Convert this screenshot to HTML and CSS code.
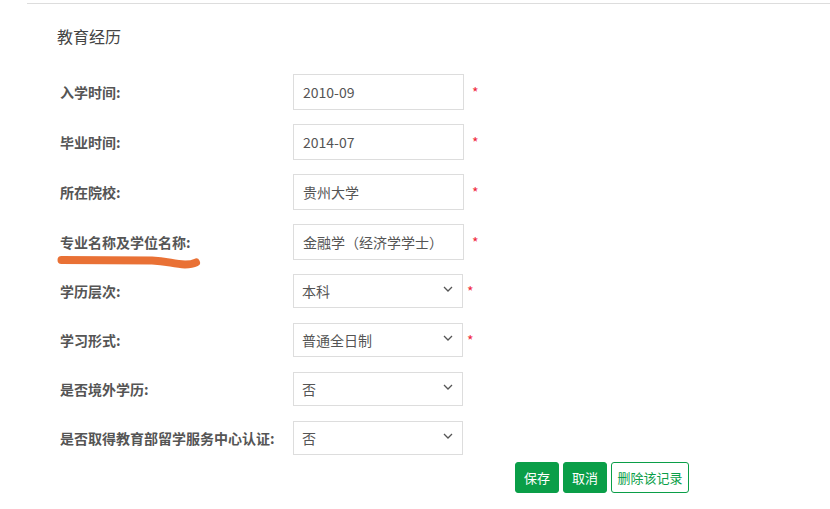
FILE: index.html
```html
<html>
  <head>
    <meta charset="utf-8">
    <link rel="stylesheet" href="styles.css">
  </head>
  <body>
    <div class="panel">
      <h3 class="title">教育经历</h3>
      <form class="edu_form">
        <div class="row">
          <label class="lbl">入学时间:</label>
          <input class="txt" type="text" value="2010-09">
          <span class="req">*</span>
        </div>
        <div class="row">
          <label class="lbl">毕业时间:</label>
          <input class="txt" type="text" value="2014-07">
          <span class="req">*</span>
        </div>
        <div class="row">
          <label class="lbl">所在院校:</label>
          <input class="txt" type="text" value="贵州大学">
          <span class="req">*</span>
        </div>
        <div class="row">
          <label class="lbl marked">专业名称及学位名称:
            <svg class="scribble" width="150" height="20" viewBox="0 0 150 20">
              <path d="M4.5 8 L95 8.5 C110 9 116 12 128 12.5 C134 12.5 137 11.5 139 10.5" fill="none" stroke="#e8692a" stroke-width="8" stroke-linecap="round" opacity="0.95"/>
            </svg>
          </label>
          <input class="txt" type="text" value="金融学（经济学学士）">
          <span class="req">*</span>
        </div>
        <div class="row sel_row">
          <label class="lbl">学历层次:</label>
          <div class="sel_wrap">
            <select class="sel"><option>本科</option></select>
            <svg class="arrow" width="10" height="6" viewBox="0 0 10 6"><path d="M1 1 L5 5 L9 1" fill="none" stroke="#555" stroke-width="1.3"/></svg>
          </div>
          <span class="req small">*</span>
        </div>
        <div class="row sel_row">
          <label class="lbl">学习形式:</label>
          <div class="sel_wrap">
            <select class="sel"><option>普通全日制</option></select>
            <svg class="arrow" width="10" height="6" viewBox="0 0 10 6"><path d="M1 1 L5 5 L9 1" fill="none" stroke="#555" stroke-width="1.3"/></svg>
          </div>
          <span class="req small">*</span>
        </div>
        <div class="row sel_row">
          <label class="lbl">是否境外学历:</label>
          <div class="sel_wrap">
            <select class="sel"><option>否</option></select>
            <svg class="arrow" width="10" height="6" viewBox="0 0 10 6"><path d="M1 1 L5 5 L9 1" fill="none" stroke="#555" stroke-width="1.3"/></svg>
          </div>
        </div>
        <div class="row sel_row">
          <label class="lbl">是否取得教育部留学服务中心认证:</label>
          <div class="sel_wrap">
            <select class="sel"><option>否</option></select>
            <svg class="arrow" width="10" height="6" viewBox="0 0 10 6"><path d="M1 1 L5 5 L9 1" fill="none" stroke="#555" stroke-width="1.3"/></svg>
          </div>
        </div>
        <div class="btns">
          <button type="button" class="btn btn_green">保存</button>
          <button type="button" class="btn btn_green">取消</button>
          <button type="button" class="btn btn_line">删除该记录</button>
        </div>
      </form>
    </div>
  </body>
</html>
```

FILE: styles.css
```css
body {
  margin: 0;
  background-color: #fff;
  font-family: "Microsoft YaHei", "Noto Sans CJK SC", "Liberation Sans", sans-serif;
  color: #555;
}
.panel {
  margin: 3px 0 0 27px;
  border-top: 1px solid #ddd;
  padding-left: 30px;
}
.title {
  margin: 20px 0 26px 0;
  font-size: 16px;
  line-height: 24px;
  font-weight: normal;
  color: #444;
}
.edu_form {
  padding-left: 3px;
}
.row {
  display: flex;
  align-items: center;
  height: 36px;
  margin-bottom: 14px;
}
.sel_row {
  height: 34px;
  margin-bottom: 15px;
}
.lbl {
  width: 233px;
  font-size: 14px;
  font-weight: bold;
  color: #555;
  position: relative;
}
.marked .scribble {
  position: absolute;
  left: -3px;
  top: 20px;
}
.txt {
  box-sizing: border-box;
  width: 171px;
  height: 36px;
  border: 1px solid #ddd;
  padding: 0 9px;
  font-family: inherit;
  font-size: 14px;
  color: #555;
  outline: none;
}
.sel_wrap {
  position: relative;
  width: 170px;
  height: 34px;
}
.sel {
  box-sizing: border-box;
  width: 170px;
  height: 34px;
  border: 1px solid #ddd;
  padding: 0 8px;
  font-family: inherit;
  font-size: 14px;
  color: #555;
  background-color: #fff;
  -webkit-appearance: none;
  appearance: none;
  outline: none;
}
.arrow {
  position: absolute;
  right: 10px;
  top: 12px;
}
.req {
  color: #f0283c;
  font-size: 14px;
  margin-left: 8px;
}
.req.small {
  margin-left: 4px;
}
.btns {
  display: flex;
  gap: 4px;
  margin-left: 455px;
  margin-top: -8px;
}
.btn {
  height: 31px;
  border-radius: 3px;
  font-family: inherit;
  font-size: 13px;
  padding: 0;
  cursor: pointer;
}
.btn_green {
  width: 44px;
  background-color: #0a9e48;
  border: 1px solid #0a9e48;
  color: #fff;
}
.btn_line {
  width: 78px;
  background-color: #fff;
  border: 1px solid #0a9e48;
  color: #0a9e48;
}
```
